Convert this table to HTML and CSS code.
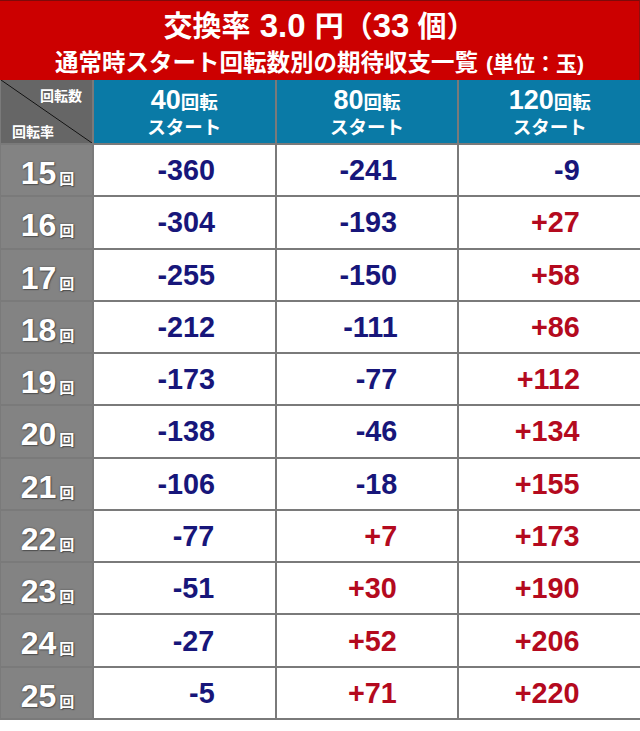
FILE: index.html
```html
<!DOCTYPE html>
<html lang="ja">
<head>
<meta charset="utf-8">
<link rel="stylesheet" href="styles.css">
</head>
<body>
<div class="page">
  <header class="title">
    <div class="t1">交換率<span class="num"> 3.0 </span>円（<span class="num">33</span> 個）</div>
    <div class="t2">通常時スタート回転数別の期待収支一覧<span class="unit">(単位：玉)</span></div>
  </header>
  <div class="grid">
    <div class="corner"><span class="c-top">回転数</span><span class="c-bot">回転率</span></div>
    <div class="colh"><div><span class="big">40</span>回転</div><div>スタート</div></div>
    <div class="colh"><div><span class="big">80</span>回転</div><div>スタート</div></div>
    <div class="colh"><div><span class="big">120</span>回転</div><div>スタート</div></div>

    <div class="rowh"><span class="big">15</span><span class="kai">回</span></div>
    <div class="cell neg"><span>-360</span></div><div class="cell neg"><span>-241</span></div><div class="cell neg"><span>-9</span></div>
    <div class="rowh"><span class="big">16</span><span class="kai">回</span></div>
    <div class="cell neg"><span>-304</span></div><div class="cell neg"><span>-193</span></div><div class="cell pos"><span>+27</span></div>
    <div class="rowh"><span class="big">17</span><span class="kai">回</span></div>
    <div class="cell neg"><span>-255</span></div><div class="cell neg"><span>-150</span></div><div class="cell pos"><span>+58</span></div>
    <div class="rowh"><span class="big">18</span><span class="kai">回</span></div>
    <div class="cell neg"><span>-212</span></div><div class="cell neg"><span>-111</span></div><div class="cell pos"><span>+86</span></div>
    <div class="rowh"><span class="big">19</span><span class="kai">回</span></div>
    <div class="cell neg"><span>-173</span></div><div class="cell neg"><span>-77</span></div><div class="cell pos"><span>+112</span></div>
    <div class="rowh"><span class="big">20</span><span class="kai">回</span></div>
    <div class="cell neg"><span>-138</span></div><div class="cell neg"><span>-46</span></div><div class="cell pos"><span>+134</span></div>
    <div class="rowh"><span class="big">21</span><span class="kai">回</span></div>
    <div class="cell neg"><span>-106</span></div><div class="cell neg"><span>-18</span></div><div class="cell pos"><span>+155</span></div>
    <div class="rowh"><span class="big">22</span><span class="kai">回</span></div>
    <div class="cell neg"><span>-77</span></div><div class="cell pos"><span>+7</span></div><div class="cell pos"><span>+173</span></div>
    <div class="rowh"><span class="big">23</span><span class="kai">回</span></div>
    <div class="cell neg"><span>-51</span></div><div class="cell pos"><span>+30</span></div><div class="cell pos"><span>+190</span></div>
    <div class="rowh"><span class="big">24</span><span class="kai">回</span></div>
    <div class="cell neg"><span>-27</span></div><div class="cell pos"><span>+52</span></div><div class="cell pos"><span>+206</span></div>
    <div class="rowh"><span class="big">25</span><span class="kai">回</span></div>
    <div class="cell neg"><span>-5</span></div><div class="cell pos"><span>+71</span></div><div class="cell pos"><span>+220</span></div>
  </div>
</div>
</body>
</html>
```

FILE: styles.css
```css
html, body {
  margin: 0;
  padding: 0;
  background: #ffffff;
}
body {
  font-family: "Liberation Sans", "Noto Sans CJK JP", sans-serif;
  font-weight: bold;
}
.page {
  width: 640px;
}
.title {
  height: 80px;
  box-sizing: border-box;
  background: #cc0000;
  border-top: 1px solid #7d0a0a;
  border-right: 1px solid #8a1010;
  color: #fff;
  text-align: center;
  display: flex;
  flex-direction: column;
  align-items: center;
  padding-top: 6px;
}
.t1 {
  font-size: 29px;
  line-height: 38px;
  white-space: nowrap;
}
.t1 .num {
  font-size: 33px;
}
.t2 {
  font-size: 23.5px;
  line-height: 32px;
  white-space: nowrap;
  padding-top: 1px;
}
.t2 .unit {
  font-size: 21px;
  margin-left: 8px;
}
.grid {
  display: grid;
  grid-template-columns: 91px 1fr 1fr 1fr;
  grid-template-rows: 63px repeat(11, 1fr);
  gap: 2px;
  height: 640px;
  box-sizing: border-box;
  padding: 0 0 2px 1px;
  background: #7a7a7a;
}
.corner {
  position: relative;
  background: linear-gradient(to top right, #666666 calc(50% - 0.8px), #111111 50%, #666666 calc(50% + 0.8px));
  color: #fff;
  font-size: 14px;
}
.c-top {
  position: absolute;
  top: 5px;
  right: 10px;
}
.c-bot {
  position: absolute;
  bottom: 2px;
  left: 11px;
}
.colh {
  background: #0a7aa6;
  color: #fff;
  display: flex;
  flex-direction: column;
  align-items: center;
  justify-content: center;
  font-size: 18.5px;
  line-height: 25px;
  padding-top: 5px;
}
.colh .big {
  font-size: 27px;
}
.rowh {
  background: #838383;
  color: #fff;
  display: flex;
  align-items: baseline;
  justify-content: center;
  padding-top: 6px;
  padding-left: 2px;
  text-shadow: 0 0 2px #444, 1px 1px 1px #555;
}
.rowh .big {
  font-size: 32px;
  line-height: 44px;
}
.rowh .kai {
  font-size: 15px;
  margin-left: 3px;
}
.cell {
  background: #fff;
  display: flex;
  align-items: center;
  justify-content: flex-end;
  padding-right: 60px;
  font-size: 30px;
}
.cell span {
  display: inline-block;
  transform: scaleX(0.96);
  transform-origin: right center;
}
.neg {
  color: #17167a;
}
.pos {
  color: #b40a1e;
}
```
